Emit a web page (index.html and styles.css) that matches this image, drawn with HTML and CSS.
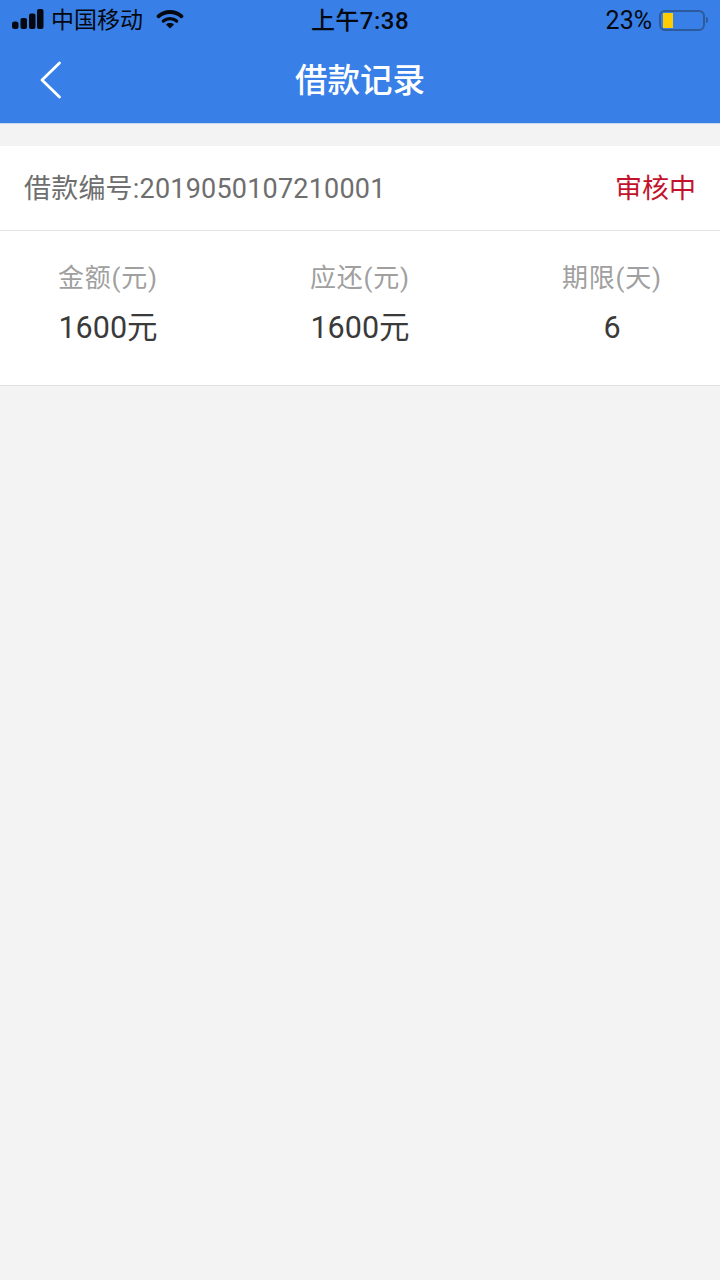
FILE: index.html
```html
<!DOCTYPE html>
<html lang="zh-CN">
<head>
    <meta charset="UTF-8">
    <meta name="viewport" content="width=device-width, initial-scale=1.0">
    <title>借款记录</title>
    <link rel="stylesheet" href="styles.css">
</head>
<body>
    <header class="top-bar">
        <div class="status-bar">
            <div class="status-left">
                <svg class="signal" width="32" height="20" viewBox="0 0 32 20">
                    <rect x="0" y="12.5" width="6.5" height="7.5" rx="2.5"/>
                    <rect x="8.5" y="9" width="6.5" height="11" rx="2"/>
                    <rect x="17" y="4.5" width="6.5" height="15.5" rx="2"/>
                    <rect x="25" y="0" width="6.5" height="20" rx="2"/>
                </svg>
                <span class="carrier">中国移动</span>
                <svg class="wifi" width="28" height="20" viewBox="0 0 28 20">
                    <path d="M2.6 7.2 C9 1.6 19 1.6 25.4 7.2" fill="none" stroke="#05080f" stroke-width="3.8" stroke-linecap="round"/>
                    <path d="M7.4 12 C11 8.8 17 8.8 20.6 12" fill="none" stroke="#05080f" stroke-width="3.4" stroke-linecap="round"/>
                    <path d="M10 15.4 C12.2 13.6 15.8 13.6 18 15.4 L14.6 18.9 Q14 19.5 13.4 18.9 Z" fill="#05080f"/>
                </svg>
            </div>
            <div class="status-time">上午7:38</div>
            <div class="status-right">
                <span class="battery-text">23%</span>
                <span class="battery"><span class="battery-level"></span></span>
                <span class="battery-tip"></span>
            </div>
        </div>
        <div class="nav-bar">
            <svg class="back" width="24" height="40" viewBox="0 0 24 40">
                <path d="M20.5 3 L3 20 L20.5 37" fill="none" stroke="#fff" stroke-width="2.8" stroke-linecap="round" stroke-linejoin="round"/>
            </svg>
            <h1 class="nav-title">借款记录</h1>
        </div>
    </header>

    <section class="record">
        <div class="record-head">
            <span class="record-no">借款编号:2019050107210001</span>
            <span class="record-status">审核中</span>
        </div>
        <div class="record-body">
            <div class="cell">
                <div class="cell-label">金额(元)</div>
                <div class="cell-value">1600元</div>
            </div>
            <div class="cell">
                <div class="cell-label">应还(元)</div>
                <div class="cell-value">1600元</div>
            </div>
            <div class="cell">
                <div class="cell-label">期限(天)</div>
                <div class="cell-value">6</div>
            </div>
        </div>
    </section>
</body>
</html>
```
FILE: styles.css
```css
html, body {
    margin: 0;
    padding: 0;
}
body {
    width: 720px;
    min-height: 1280px;
    background-color: #f3f3f3;
    font-family: Roboto, "Noto Sans CJK SC", sans-serif;
    overflow: hidden;
}
.top-bar {
    height: 124px;
    box-sizing: border-box;
    background-color: #3880e8;
    border-bottom: 1px solid #c9d8ee;
}
.status-bar {
    height: 40px;
    padding: 0 12px;
    display: flex;
    align-items: center;
    justify-content: space-between;
    color: #05080f;
    position: relative;
}
.status-left {
    display: flex;
    align-items: center;
}
.signal {
    fill: #05080f;
    margin-right: 7px;
    margin-top: -2px;
}
.carrier {
    font-size: 23px;
    line-height: 36px;
    padding-top: 2px;
    width: 105px;
}
.wifi {
    margin-top: -3px;
}
.status-time {
    position: absolute;
    left: 0;
    right: 0;
    text-align: center;
    font-size: 24px;
    line-height: 36px;
    padding-top: 1px;
    letter-spacing: 0.5px;
    font-weight: 500;
}
.status-right {
    display: flex;
    align-items: center;
}
.battery-text {
    font-size: 25px;
    margin-right: 7px;
}
.battery {
    width: 46px;
    height: 21px;
    box-sizing: border-box;
    padding: 1px 2px;
    border: 2px solid #2c5a9c;
    border-radius: 6px;
    display: block;
}
.battery-level {
    display: block;
    width: 10px;
    height: 100%;
    background-color: #ffcc00;
}
.battery-tip {
    width: 2px;
    height: 6px;
    margin-left: 1px;
    background-color: #2c5a9c;
    border-radius: 0 2px 2px 0;
}
.nav-bar {
    height: 83px;
    display: flex;
    align-items: center;
    justify-content: center;
    position: relative;
}
.back {
    position: absolute;
    left: 39px;
    top: 20px;
}
.nav-title {
    margin: 0;
    padding-bottom: 8px;
    font-size: 32.5px;
    font-weight: 500;
    color: #fff;
}
.record {
    margin-top: 22px;
    background-color: #fff;
    border-bottom: 1px solid #e2e2e2;
}
.record-head {
    padding: 0 24px 3px;
    height: 81px;
    display: flex;
    align-items: center;
    justify-content: space-between;
    border-bottom: 1px solid #e2e2e2;
    font-size: 27px;
}
.record-no {
    color: #6e6e6e;
    letter-spacing: 0.2px;
}
.record-status {
    color: #c3132c;
}
.record-body {
    height: 154px;
    padding: 29px 58px 0;
    display: flex;
    justify-content: space-between;
    box-sizing: border-box;
}
.cell {
    width: 100px;
    text-align: center;
    white-space: nowrap;
}
.cell-label {
    font-size: 26px;
    line-height: 36px;
    letter-spacing: 0.8px;
    color: #a0a0a0;
}
.cell-value {
    margin-top: 14px;
    font-size: 30.5px;
    line-height: 36px;
    color: #3a3a3a;
}
```
